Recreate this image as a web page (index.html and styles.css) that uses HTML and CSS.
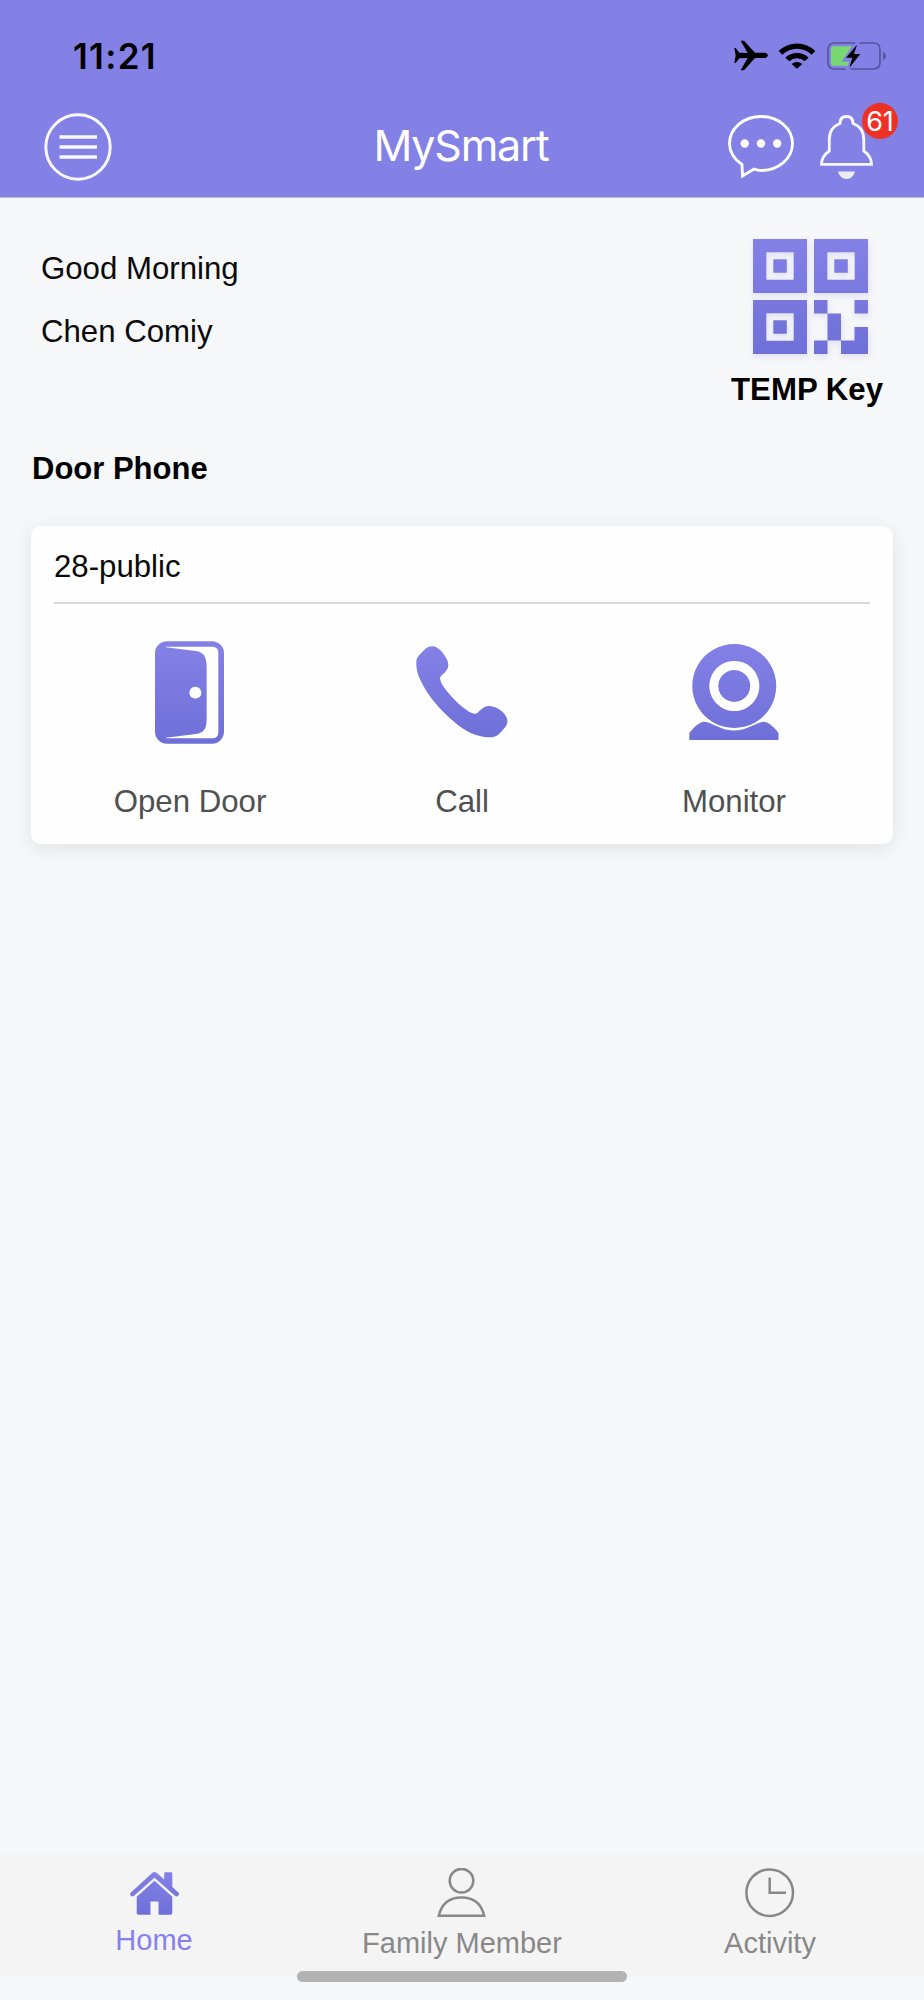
FILE: index.html
```html
<!DOCTYPE html>
<html lang="en">
<head>
  <meta charset="UTF-8" />
  <meta name="viewport" content="width=device-width, initial-scale=1" />
  <title>MySmart</title>
  <link rel="stylesheet" href="styles.css">
</head>
<body>

  <header class="header">
    <div class="status-bar">
      <span class="time">11:21</span>
      <div class="status-icons">
        <svg class="plane" width="34" height="31" viewBox="0 0 102 93">
          <path d="M1 24h4l11 14 25 1L20 2h10l33 36h31q8 3 8 8t-8 8H63L30 91H20l21-37-25 1L5 69H1l4-22z" />
        </svg>
        <svg class="wifi" width="38" height="27" viewBox="0 0 114 81">
          <path d="M2 27a79 79 0 0 1 110 0L101 38a63 63 0 0 0-88 0z" />
          <path d="M22 47a51 51 0 0 1 70 0L80 58a34 34 0 0 0-46 0z" />
          <path d="M41 66a24 24 0 0 1 32 0L57 80z" />
        </svg>
        <svg class="battery" width="60" height="30" viewBox="0 0 180 90">
          <path d="M88 6H26Q6 6 6 26v38q0 20 20 20h33M100 6h42q20 0 20 20v38q0 20-20 20H73" fill="none" stroke="#55539d" stroke-width="5" />
          <path d="M171 32q9 5 9 13t-9 13z" fill="#55539d" />
          <path d="M24 16h54L49 58q-2 4 2 4h18l-3 12H24q-9 0-9-9V25q0-9 9-9z" fill="#78d972" />
          <path d="M93 11L60 50h19l-9 30 33-41H84z" />
        </svg>
      </div>
    </div>
    <div class="nav-bar">
      <button class="icon-button" aria-label="Menu">
        <svg width="68" height="68" viewBox="0 0 68 68" fill="none" stroke="#f8f8fc">
          <circle cx="34" cy="34" r="32.2" stroke-width="3" />
          <path d="M15.500 24h37.500M15.500 34h37.500M15.500 44h37.500" stroke-width="3.6" />
        </svg>
      </button>
      <h1 class="title">MySmart</h1>
      <div class="nav-actions">
        <button class="icon-button" aria-label="Messages">
          <svg width="66" height="64" viewBox="0 0 66 64">
            <path d="M14 49.500C6 44 1.500 37 1.500 28.500C1.500 13.500 15.500 1.500 33 1.500S64.500 13.500 64.500 28.500 50.500 55.500 33 55.500q-3.500 0-7-1.500L14.500 61z" fill="none" stroke="#fff" stroke-width="2.8" />
            <circle cx="16.700" cy="28.500" r="4.200" fill="#fff" />
            <circle cx="33" cy="28.500" r="4.200" fill="#fff" />
            <circle cx="49.200" cy="28.500" r="4.200" fill="#fff" />
          </svg>
        </button>
        <button class="icon-button bell" aria-label="Notifications">
          <svg width="53" height="64" viewBox="0 0 53 64">
            <path d="M1.500 49.300q0-8 7.800-13.300V24.500C9.300 16 13 11 20 8.500 20 4 22.500 1.500 26.500 1.500S33 4 33 8.500c7 2.500 10.800 7.500 10.800 16V36q7.700 5.300 7.700 13.300z" fill="none" stroke="#f8f8fc" stroke-width="2.800" />
            <path d="M18 56.500h17c-1 4.500-4.500 7.500-8.500 7.500s-7.500-3-8.500-7.500z" fill="#ececf4" />
          </svg>
          <span class="badge">61</span>
        </button>
      </div>
    </div>
  </header>

  <main class="content">
    <section class="welcome">
      <div class="greeting">
        <p>Good Morning</p>
        <p>Chen Comiy</p>
      </div>
      <div class="temp-key">
        <svg class="qr" width="115" height="115" viewBox="0 0 115 115">
          <defs>
            <linearGradient id="purple" x1="0" y1="0" x2="0" y2="1">
              <stop offset="0" stop-color="#8481e6" />
              <stop offset="1" stop-color="#6e70d8" />
            </linearGradient>
          </defs>
          <path fill="url(#purple)" fill-rule="evenodd" d="M0 0h54v54H0zM13.300 13.300v27.400h27.400V13.300zM20.300 20.300h13.500v13.500H20.300z
            M61 0h54v54H61zM74.300 13.300v27.400h27.400V13.300zM81.300 20.300h13.500v13.500H81.300z
            M0 61h54v54H0zM13.300 74.300v27.400h27.400V74.300zM20.300 81.300h13.500v13.500H20.300z
            M61 61h13.500v13.500H61zM101.500 61H115v13.500h-13.500zM74.500 74.500H88v27H74.500zM61 101.500h13.500V115H61zM101.500 88H115v27H88v-13.500h13.500z" />
        </svg>
        <span class="temp-key-label">TEMP Key</span>
      </div>
    </section>

    <h2 class="section-title">Door Phone</h2>

    <section class="card">
      <div class="card-name">28-public</div>
      <div class="card-actions">
        <div class="action">
          <div class="action-icon door">
            <svg width="69" height="103" viewBox="0 0 207 309">
              <path fill="url(#purple)" fill-rule="evenodd" d="M36 1h135a36 36 0 0 1 36 36v235a36 36 0 0 1-36 36H36A36 36 0 0 1 0 272V37A36 36 0 0 1 36 1zM32 19l90 11c23 3 33 16 33 48v157c0 29-9 41-32 44L32 290v2h140q18 0 18-18V35q0-18-18-18H32zM121 137a18 18 0 1 0 .1 0z" />
            </svg>
          </div>
          <span>Open Door</span>
        </div>
        <div class="action">
          <div class="action-icon">
            <svg width="92" height="92" viewBox="0 0 276 276">
              <path fill="url(#purple)" d="M47 1C61 1 71 9 81 22C91 35 97 46 97 57C97 67 91 75 84 82C74 91 71 92 73 101C75 112 85 126 100 144C119 166 137 183 157 196C170 204 178 205 185 200C195 191 204 180 219 180C236 180 256 191 267 206C278 221 276 234 266 245C256 256 248 267 239 271C232 274 226 274 220 274C180 272 150 258 115 228C70 190 35 150 12 100C3 80 1 65 1 51C1 38 5 32 15 22C26 11 34 1 47 1z" />
            </svg>
          </div>
          <span>Call</span>
        </div>
        <div class="action">
          <div class="action-icon">
            <svg width="90" height="96" viewBox="0 0 90 96">
              <path fill="url(#purple)" fill-rule="evenodd" d="M45.300 0a42 42 0 1 1-.1 0zM45.300 17a25 25 0 1 0 .1 0zM45.300 26a16 16 0 1 1-.1 0z
                M.3 96v-7Q6 81.500 12 78.500q3-1.500 7 0C28 82 35 86.500 45 86.500S62 82 71 78.500q4-1.500 7 0Q84 81.500 89.500 89v7z" />
            </svg>
          </div>
          <span>Monitor</span>
        </div>
      </div>
    </section>
  </main>

  <nav class="tab-bar">
    <a class="tab active">
      <svg width="49" height="43" viewBox="0 0 146 128">
        <path fill="url(#purple)" d="M66 3q7-6 14 0l22 19V4q0-3 3-3h18q3 0 3 3v41l19 17q3 4-1 8-5 5-10 1L73 17 12 71q-5 4-10-1-3-4 0-8zM20 74l53-48 53 48v48q0 5-5 5H85V88H61v39H25q-5 0-5-5z" />
      </svg>
      <span>Home</span>
    </a>
    <a class="tab">
      <svg width="50" height="50" viewBox="0 0 50 50" fill="none" stroke="#888" stroke-width="2.500">
        <circle cx="24.500" cy="12.700" r="11.800" />
        <path d="M1.800 47.800C4.500 36 12.500 29.500 24.500 29.500S44.500 36 47.200 47.800z" />
      </svg>
      <span>Family Member</span>
    </a>
    <a class="tab">
      <svg width="50" height="50" viewBox="0 0 50 50" fill="none" stroke="#888" stroke-width="2.500">
        <circle cx="24.700" cy="24.700" r="23.300" />
        <path d="M24.700 9.500v15.200h16.300" />
      </svg>
      <span>Activity</span>
    </a>
    <div class="home-indicator"></div>
  </nav>

</body>
</html>
```

FILE: styles.css
```css
* { box-sizing: border-box; }
body {
  margin: 0;
  min-height: 2000px;
  display: flex;
  flex-direction: column;
  font-family: "Liberation Sans", Arial, sans-serif;
  font-size: 31.2px;
  line-height: 36px;
  color: #0a0a0a;
  background: #f6f7f9;
}
svg { display: block; }
.header {
  height: 198px;
  background: #8481e6;
  border-bottom: 1px solid #b9b9cf;
  font-family: Inter, sans-serif;
}
.status-bar {
  height: 96px;
  padding: 15px 38px 0 73px;
  display: flex;
  justify-content: space-between;
  align-items: center;
  color: #000;
}
.time {
  font-size: 35px;
  font-weight: 600;
  letter-spacing: 1.3px;
}
.status-icons {
  display: flex;
  align-items: center;
}
.wifi { margin: 0 10px; }
.nav-bar {
  height: 101px;
  padding: 0 51px 0 44px;
  display: grid;
  grid-template-columns: 1fr auto 1fr;
  align-items: center;
}
.title {
  margin: 0 0 3px 5px;
  font-size: 43px;
  font-weight: 400;
  letter-spacing: -1.2px;
  color: #fff;
}
.icon-button {
  padding: 0;
  border: none;
  background: none;
  justify-self: start;
  position: relative;
  cursor: pointer;
}
.nav-actions {
  display: flex;
  justify-content: flex-end;
  gap: 26px;
}
.badge {
  position: absolute;
  top: -12px;
  right: -25px;
  width: 36px;
  height: 36px;
  border-radius: 50%;
  background: #ee3124;
  color: #fff;
  font-family: Inter, sans-serif;
  font-size: 27px;
  line-height: 37px;
  text-align: center;
}
.content {
  flex: 1;
  padding: 0 31px;
}
.welcome {
  height: 253px;
  padding: 41px 10px 0;
  display: flex;
  justify-content: space-between;
}
.greeting p { margin: 12px 0 27px; }
.temp-key {
  display: flex;
  flex-direction: column;
  align-items: center;
}
.qr {
  margin-left: 6px;
  filter: drop-shadow(1px 3px 3px rgba(132, 129, 230, 0.2));
}
.temp-key-label {
  margin-top: 18px;
  font-weight: bold;
  color: #000;
}
.section-title {
  margin: 0 0 0 1px;
  font-size: 31px;
  color: #000;
}
.card {
  margin-top: 39px;
  height: 318px;
  padding: 0 23px;
  border-radius: 10px;
  background: #fefefe;
  box-shadow: 0 4px 20px rgba(0, 0, 0, 0.09);
}
.card-name {
  height: 78px;
  padding-top: 23px;
  border-bottom: 2px solid #d9d9d9;
}
.card-actions {
  display: grid;
  grid-template-columns: repeat(3, 1fr);
  padding-top: 36px;
}
.action {
  display: flex;
  flex-direction: column;
  align-items: center;
  color: #505050;
}
.action-icon {
  height: 104px;
  margin-bottom: 40px;
  display: flex;
  align-items: center;
}
.door { margin-right: 1px; }
.tab-bar {
  height: 124px;
  margin-bottom: 23px;
  display: grid;
  grid-template-columns: repeat(3, 1fr);
  position: relative;
  background: #f4f4f4;
  font-size: 29px;
  line-height: 34px;
}
.tab {
  padding-top: 15px;
  display: flex;
  flex-direction: column;
  align-items: center;
  gap: 8px;
  color: #888;
}
.tab.active {
  padding-top: 19px;
  color: #8481ee;
}
.home-indicator {
  position: absolute;
  left: 50%;
  bottom: -5px;
  width: 330px;
  height: 11px;
  border-radius: 6px;
  background: #b3b3b3;
  transform: translateX(-50%);
}
```
